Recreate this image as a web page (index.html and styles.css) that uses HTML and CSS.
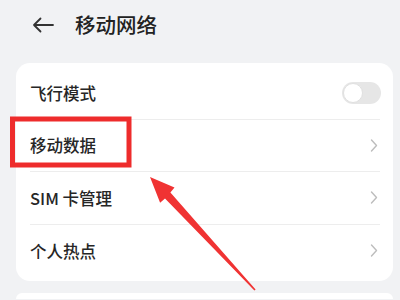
FILE: index.html
```html
<!DOCTYPE html>
<html lang="zh-CN">
<head>
<meta charset="utf-8">
<link rel="stylesheet" href="styles.css">
</head>
<body>
<div class="page">
  <header class="header">
    <svg class="back" width="22" height="16" viewBox="0 0 22 16"><path d="M21 8H2M8.5 1.5L2 8l6.5 6.5" fill="none" stroke="#333" stroke-width="1.8" stroke-linecap="round" stroke-linejoin="round"/></svg>
    <h1 class="title">移动网络</h1>
  </header>
  <section class="card">
    <div class="row"><span class="label">飞行模式</span><span class="toggle"><span class="knob"></span></span></div>
    <div class="row"><span class="label">移动数据</span><svg class="chev" width="8" height="13" viewBox="0 0 8 13"><path d="M1.5 1l5 5.5-5 5.5" fill="none" stroke="#bdbdbd" stroke-width="1.4" stroke-linecap="round" stroke-linejoin="round"/></svg></div>
    <div class="row"><span class="label">SIM 卡管理</span><svg class="chev" width="8" height="13" viewBox="0 0 8 13"><path d="M1.5 1l5 5.5-5 5.5" fill="none" stroke="#bdbdbd" stroke-width="1.4" stroke-linecap="round" stroke-linejoin="round"/></svg></div>
    <div class="row last"><span class="label">个人热点</span><svg class="chev" width="8" height="13" viewBox="0 0 8 13"><path d="M1.5 1l5 5.5-5 5.5" fill="none" stroke="#bdbdbd" stroke-width="1.4" stroke-linecap="round" stroke-linejoin="round"/></svg></div>
  </section>
  <section class="card card2"></section>
  <svg class="annot" width="400" height="300" viewBox="0 0 400 300">
    <rect x="12.5" y="119" width="116.5" height="46" fill="none" stroke="#ee2c2c" stroke-width="5"/>
    <polygon points="150,177 174.5,187.5 170.4,192.4 255.6,289.6 254.4,290.4 165.0,198.6 160.1,202.7" fill="#f03333"/>
  </svg>
</div>
</body>
</html>
```
FILE: styles.css
```css
html, body {
  margin: 0;
  padding: 0;
  background: #f1f2f4;
  overflow: hidden;
}
.page {
  position: relative;
  width: 400px;
  height: 300px;
  overflow: hidden;
  padding: 0 7px 0 16px;
  box-sizing: border-box;
  font-family: "Noto Sans CJK SC", "Noto Sans", sans-serif;
  color: #222;
}
.header {
  height: 49px;
  display: flex;
  align-items: center;
  padding-left: 16px;
}
.back {
  display: block;
  margin-top: 1px;
}
.title {
  margin: 0 0 0 21px;
  font-size: 20.5px;
  font-weight: 500;
  color: #222;
  line-height: 1;
}
.card {
  margin-top: 14px;
  background: #fff;
  border-radius: 14px;
  padding: 4px 13px 4px 14px;
}
.row {
  height: 52.5px;
  box-sizing: border-box;
  display: flex;
  align-items: center;
  justify-content: space-between;
  border-bottom: 1px solid #ededed;
}
.row.last {
  border-bottom: none;
}
.label {
  font-size: 16.5px;
  font-weight: 500;
  color: #262626;
  line-height: 1;
}
.toggle {
  width: 39px;
  height: 22px;
  border-radius: 11px;
  background: #e6e6e6;
  display: flex;
  align-items: center;
  padding: 0 1px;
  box-sizing: border-box;
  margin-right: -1px;
}
.knob {
  width: 20px;
  height: 20px;
  border-radius: 50%;
  background: #fff;
  box-sizing: border-box;
  border: 1px solid #e0e0e0;
}
.chev {
  display: block;
  margin-right: 2px;
}
.card2 {
  margin-top: 12px;
  height: 6px;
  padding: 0;
  border-radius: 14px 14px 0 0;
}
.annot {
  position: absolute;
  left: 0;
  top: 0;
  pointer-events: none;
}
```
